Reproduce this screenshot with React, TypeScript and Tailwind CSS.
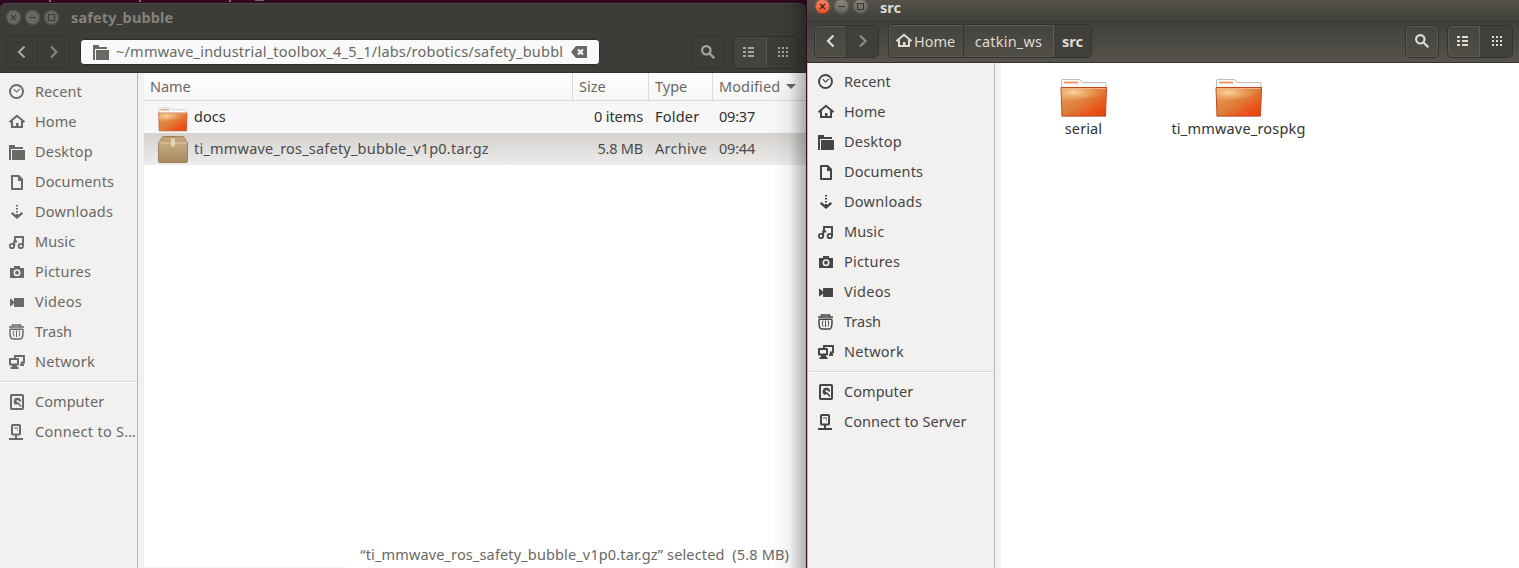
import React from "react";

type P = { children?: React.ReactNode; className?: string };

const Icon = ({ children, className = "" }: P) => (
  <svg viewBox="0 0 16 16" className={"h-4 w-4 shrink-0 " + className} fill="currentColor">
    {children}
  </svg>
);

const Recent = () => (
  <Icon>
    <circle cx="7.5" cy="7.5" r="6.5" fill="none" stroke="currentColor" strokeWidth="1.9" />
    <path d="M4.7 5.2l2.800 2.800L11 4.800" fill="none" stroke="currentColor" strokeWidth="1.1" />
  </Icon>
);
const Home = () => (
  <Icon>
    <path d="M.5 8.2L8 1.8l7.500 6.400" fill="none" stroke="currentColor" strokeWidth="2" />
    <path d="M3 7v6h10V7" fill="none" stroke="currentColor" strokeWidth="2" />
    <path d="M7 9h2.500v4H7z" />
  </Icon>
);
const Folder = () => (
  <Icon>
    <path d="M0 1h6v2h8v2H2v11H0z" />
    <path d="M3 6h13v10H3z" />
  </Icon>
);
const Document = () => (
  <Icon>
    <path fillRule="evenodd" d="M2.500 1H10l4 4v10q0 1-1 1H3q-1 0-1-1V1.500zM4 3v11h8V7H9V3z" />
  </Icon>
);
const Download = () => (
  <Icon>
    <path d="M7 1h2v1.500H7zM7 4h2v1.500H7zM7 7h2v1.500H7zM7 10h2v3H7z" />
    <path d="M2.700 8.800L8 13.500l5.300-4.700" fill="none" stroke="currentColor" strokeWidth="2.400" />
  </Icon>
);
const Music = () => (
  <Icon>
    <circle cx="3" cy="12" r="2.200" fill="none" stroke="currentColor" strokeWidth="1.800" />
    <circle cx="11.800" cy="12" r="2.200" fill="none" stroke="currentColor" strokeWidth="1.800" />
    <path d="M5.200 12V7.500h3M6 8V3h8v9" fill="none" stroke="currentColor" strokeWidth="1.900" />
  </Icon>
);
const Camera = () => (
  <Icon>
    <path fillRule="evenodd" d="M1 4h4V2h6v2h4v10H1zM8 5.200a3.500 3.500 0 100 7 3.500 3.500 0 000-7z" />
    <circle cx="8" cy="8.700" r="1.900" />
  </Icon>
);
const Video = () => (
  <Icon>
    <path d="M5 4.500q0-.5.5-.5h9q.5 0 .5.5v8q0 .5-.5.5h-9q-.5 0-.5-.5V10l-4 2.500v-8L5 7z" />
    <path d="M4.500 4.500v3M4.500 9.500v3" stroke="#f2f1f0" strokeWidth=".8" />
  </Icon>
);
const Trash = () => (
  <Icon>
    <path d="M3.500 2.500V1h8v1.500M0 3h15" fill="none" stroke="currentColor" strokeWidth="1.600" />
    <path d="M1.300 6v-.8h12.400V6M1 6q-.3 9 2.500 9h8q2.800 0 2.500-9" fill="none" stroke="currentColor" strokeWidth="1.500" />
    <path d="M5 6.500q-1.500 3 0 6M7.500 6.500v6.500M10 6.500q1.500 3 0 6" fill="none" stroke="currentColor" strokeWidth="1" />
  </Icon>
);
const Network = () => (
  <Icon>
    <path d="M6 4V2h9v6.500h-3" fill="none" stroke="currentColor" strokeWidth="1.900" />
    <path fillRule="evenodd" d="M0 5q0-1 1-1h8q1 0 1 1v5.500q0 1-1 1H8V13h1.500v2h-8v-2H3v-1.500H1q-1 0-1-1zM2 6v3.500h6V6z" />
    <path d="M11.500 9H14v1h1v2h-4z" />
  </Icon>
);
const Computer = () => (
  <Icon>
    <rect x="2" y="1" width="12" height="14" rx=".7" fill="none" stroke="currentColor" strokeWidth="2" />
    <path d="M7.500 11A3.700 3.700 0 1112 8L9.800 7 9 6 7.500 6.500v1.200l1.500 1z" />
    <path d="M8.500 8.500l3.500 4" stroke="currentColor" strokeWidth="1.500" />
  </Icon>
);
const Server = () => (
  <Icon>
    <rect x="3" y="1" width="8" height="9.500" rx=".7" fill="none" stroke="currentColor" strokeWidth="2" />
    <path d="M5 3.500h4v1H5zM8 5.500h1v1H8zM6 11h2v3h6v2H0v-2h6z" />
  </Icon>
);
const Search = () => (
  <Icon>
    <circle cx="6.300" cy="6.300" r="4.200" fill="none" stroke="currentColor" strokeWidth="2.200" />
    <path d="M9.300 9.300l5 5" stroke="currentColor" strokeWidth="2.300" />
  </Icon>
);
const ListIcon = () => (
  <Icon>
    <path d="M1 3h3v2H1zM1 7h3v2H1zM1 11h3v2H1zM6 3h6v2H6zM6 7h6v2H6zM6 11h6v2H6z" />
  </Icon>
);
const GridIcon = () => (
  <Icon>
    <path d="M4 3h2v2H4zM8 3h2v2H8zM12 3h2v2h-2zM4 7h2v2H4zM8 7h2v2H8zM12 7h2v2h-2zM4 11h2v2H4zM8 11h2v2H8zM12 11h2v2h-2z" />
  </Icon>
);
const Chevron = ({ right = false }: { right?: boolean }) => (
  <Icon>
    <path d={right ? "M5 2.500l5.500 5.500L5 13.500" : "M10.500 2.500L5 8l5.500 5.500"} fill="none" stroke="currentColor" strokeWidth="2.200" />
  </Icon>
);

const places: { name: string; icon: React.ReactNode; track: string }[] = [
  { name: "Recent", icon: <Recent />, track: "tracking-[0.05px]" },
  { name: "Home", icon: <Home />, track: "tracking-[0.1px]" },
  { name: "Desktop", icon: <Folder />, track: "tracking-[0.2px]" },
  { name: "Documents", icon: <Document />, track: "tracking-[0.1px]" },
  { name: "Downloads", icon: <Download />, track: "tracking-[0.25px]" },
  { name: "Music", icon: <Music />, track: "tracking-[0.1px]" },
  { name: "Pictures", icon: <Camera />, track: "tracking-[0.2px]" },
  { name: "Videos", icon: <Video />, track: "tracking-[0.3px]" },
  { name: "Trash", icon: <Trash />, track: "tracking-normal" },
  { name: "Network", icon: <Network />, track: "tracking-[0.25px]" },
  { name: "Computer", icon: <Computer />, track: "tracking-[0.05px]" },
];

const Sidebar = ({ last, className, lastTrack }: { last: string; className: string; lastTrack: string }) => (
  <nav className={"shrink-0 border-r border-[#b6b5b3] bg-[#f2f1f0] pt-1 " + className}>
    {[...places, { name: last, icon: <Server />, track: lastTrack }].map((p) => (
      <React.Fragment key={p.name}>
        {p.name === "Computer" && <div className="mt-1 mb-1 h-0.5 border-t border-b border-t-[#d9d8d7] border-b-white" />}
        <div className="flex h-[30px] items-center gap-2.5 pl-[9px]">
          {p.icon}
          <span className={"pb-0.5 whitespace-nowrap " + p.track}>{p.name}</span>
        </div>
      </React.Fragment>
    ))}
  </nav>
);

const FolderArt = ({ className }: { className: string }) => (
  <svg viewBox="0 0 48 40" preserveAspectRatio="none" className={className}>
    <defs>
      <linearGradient id="fo" x1="0" y1="0" x2="1" y2="1">
        <stop offset="0" stopColor="#e3a05a" />
        <stop offset=".5" stopColor="#e07c3a" />
        <stop offset=".78" stopColor="#eb5318" />
        <stop offset="1" stopColor="#d9420f" />
      </linearGradient>
      <radialGradient id="fg" cx=".27" cy=".3" r=".65">
        <stop offset="0" stopColor="#f8d69c" />
        <stop offset="1" stopColor="#f0a460" stopOpacity="0" />
      </radialGradient>
    </defs>
    <path d="M1.500 12V2.500q0-1 1-1H19q1 0 2 1.500t2 1.500h22q1 0 1 1V12z" fill="#fafafa" stroke="#bdbdbd" />
    <path d="M4 3.500h14v2H4z" fill="#f09a68" />
    <path d="M1 38.500h45" stroke="#999" strokeOpacity=".45" />
    <path d="M1 9.500h45.500L45.500 38H2z" fill="url(#fo)" stroke="#c4461c" />
    <path d="M1.500 10h45v8Q28 19 2 25z" fill="url(#fg)" />
    <path d="M2 10.500h43.500" stroke="#efb588" />
  </svg>
);

const BoxArt = () => (
  <svg viewBox="0 0 30 27" className="h-[27px] w-[30px]">
    <defs>
      <linearGradient id="bx" x1="0" y1="0" x2="0" y2="1">
        <stop offset="0" stopColor="#cdb58b" />
        <stop offset="1" stopColor="#a98a5f" />
      </linearGradient>
    </defs>
    <path d="M.5 7L4 1.500q.4-1 1.200-1H25q.8 0 1.200 1L29.500 7v18.500q0 1-1 1h-27q-1 0-1-1z" fill="url(#bx)" stroke="#9d8058" />
    <path d="M1 7L4.500 1h21L29 7z" fill="#c0a478" />
    <path d="M1 7h28" stroke="#dcc9a8" />
    <path d="M13 2.500h4v8h-4z" fill="#e7dbc3" fillOpacity=".85" />
  </svg>
);

const WinButtons = ({ active = false }: { active?: boolean }) => {
  const base = "h-[15px] w-[15px] rounded-full ";
  const grey = active ? "bg-linear-to-b from-[#8c8a83] to-[#63615b] text-[#393833]" : "bg-[#686761] text-[#3c3b37]";
  return (
    <div className="flex gap-1">
      <svg viewBox="0 0 15 15" className={base + (active ? "bg-linear-to-b from-[#f6896a] to-[#e64e1c] text-[#4a2013]" : grey)} stroke="currentColor" strokeWidth="1.300" fill="none">
        <circle cx="7.500" cy="7.500" r="7" strokeOpacity=".5" strokeWidth="1" />
        <path d="M5 5l5 5M10 5l-5 5" />
      </svg>
      <svg viewBox="0 0 15 15" className={base + grey} stroke="currentColor" strokeWidth="1.200" fill="none">
        <circle cx="7.500" cy="7.500" r="7" strokeOpacity=".5" strokeWidth="1" />
        <path d="M4 7.500h7" />
      </svg>
      <svg viewBox="0 0 15 15" className={base + grey} stroke="currentColor" strokeWidth="1.200" fill="none">
        <circle cx="7.500" cy="7.500" r="7" strokeOpacity=".5" strokeWidth="1" />
        <path d="M4.500 4.500h6v6h-6z" />
      </svg>
    </div>
  );
};

const LeftWindow = () => (
  <section className="relative flex h-[568px] w-[806px] shrink-0 flex-col overflow-hidden bg-[#300a24] pt-[3px] text-[#696965]">
    <div className="absolute top-0 left-[49px] h-[2px] w-[2px] bg-[#8a6b3c]" />
    <div className="absolute top-0 left-[139px] h-[2px] w-[2px] bg-[#8a6b3c]" />
    <div className="absolute top-0 left-[229px] h-[2px] w-[2px] bg-[#8a6b3c]" />
    <div className="absolute top-0 left-[255px] h-px w-[9px] bg-[#77647a]" />
    <header className="h-[70px] shrink-0 rounded-t-md border-t border-b border-t-[#4c4b47] border-b-[#31302c] bg-[#3d3c38]">
      <div className="flex h-[27px] items-center gap-[12px] pl-[6px]">
        <WinButtons />
        <span className="pb-px font-bold tracking-[0.12px] text-[#84827b]">safety_bubble</span>
      </div>
      <div className="flex h-[42px] items-center pl-[6px]">
        <div className="flex h-8 w-16 rounded-[5px] border border-[#34332f] text-[#a7a49b]">
          <div className="flex w-8 items-center justify-center border-r border-[#34332f]">
            <Chevron />
          </div>
          <div className="flex w-8 items-center justify-center text-[#85827b]">
            <Chevron right />
          </div>
        </div>
        <div className="ml-[10px] flex h-[26px] w-[520px] items-center rounded-[4px] border border-[#2d2c29] bg-[#f9f9f9] pl-3">
          <Folder />
          <span className="ml-[7px] w-[447px] overflow-hidden pb-0.5 tracking-[0.21px] whitespace-nowrap">~/mmwave_industrial_toolbox_4_5_1/labs/robotics/safety_bubbl</span>
          <svg viewBox="0 0 16 12" className="ml-[8px] h-3 w-4">
            <path d="M5 0h11v12H5L0 6z" fill="currentColor" />
            <path d="M7 3.500l5 5M12 3.500l-5 5" stroke="#f9f9f9" strokeWidth="2" />
          </svg>
        </div>
        <div className="ml-[91px] flex h-8 w-[34px] items-center justify-center rounded-[5px] border border-[#34332f] text-[#a9a69d]">
          <Search />
        </div>
        <div className="ml-[8px] flex h-[33px] w-[66px] rounded-[5px] border border-[#302f2b] text-[#a9a69d]">
          <div className="flex w-[33px] items-center justify-center rounded-l-[4px] border-r border-[#57564f] bg-[#44433f]">
            <ListIcon />
          </div>
          <div className="flex w-[32px] items-center justify-center">
            <GridIcon />
          </div>
        </div>
      </div>
    </header>
    <div className="flex min-h-0 flex-1 bg-[#f2f1f0]">
      <Sidebar last="Connect to S…" lastTrack="tracking-[0.3px]" className="w-[138px]" />
      <main className="relative ml-1.5 flex-1 bg-white text-[#2f2f2f]">
        <div className="flex h-7 items-center border-b border-[#d9d8d5] bg-linear-to-b from-white to-[#f5f5f4] text-[#696965]">
          <span className="flex h-full w-[429px] items-center border-r border-[#dad9d7] pb-0.5 pl-1.5 tracking-[-0.1px]">Name</span>
          <span className="flex h-full w-[76px] items-center border-r border-[#dad9d7] pb-0.5 pl-1.5">Size</span>
          <span className="flex h-full w-[64px] items-center border-r border-[#dad9d7] pb-0.5 pl-1.5">Type</span>
          <span className="flex h-full flex-1 items-center gap-[6px] pl-1.5">
            <span className="pb-0.5 tracking-[0.1px]">Modified</span>
            <span className="h-0 w-0 border-x-[5px] border-t-[5px] border-x-transparent border-t-[#696965]" />
          </span>
        </div>
        <div className="flex h-8 items-center bg-[#f7f7f7]">
          <span className="flex w-[429px] items-center gap-1.5 pl-3.5">
            <FolderArt className="mt-1 h-[25px] w-[30px]" />
            <span className="pb-0.5">docs</span>
          </span>
          <span className="w-[76px] pr-1.5 pb-0.5 text-right tracking-[-0.1px]">0 items</span>
          <span className="w-16 pb-0.5 pl-1.5 tracking-[0.2px]">Folder</span>
          <span className="pb-0.5 pl-1.5 tracking-[-0.2px]">09:37</span>
        </div>
        <div className="flex h-8 items-center bg-linear-to-b from-[#d4d1ce] to-[#eeedec] text-[#4c4c4c]">
          <span className="flex w-[429px] items-center gap-1.5 pl-3.5">
            <BoxArt />
            <span className="pb-0.5 tracking-[0.21px]">ti_mmwave_ros_safety_bubble_v1p0.tar.gz</span>
          </span>
          <span className="w-[76px] pr-1.5 pb-0.5 text-right tracking-[-0.2px]">5.8 MB</span>
          <span className="w-16 pb-0.5 pl-1.5 tracking-[0.25px]">Archive</span>
          <span className="pb-0.5 pl-1.5 tracking-[-0.2px]">09:44</span>
        </div>
        <div className="absolute right-[17px] bottom-1 tracking-[0.14px] whitespace-pre text-[#696965]">“ti_mmwave_ros_safety_bubble_v1p0.tar.gz” selected  (5.8 MB)</div>
        <div className="absolute bottom-0 left-0 h-px w-[205px] bg-[#f5f5f5]" />
      </main>
    </div>
    <div className="absolute inset-y-0 right-0 w-[34px] bg-linear-to-r from-transparent via-black/5 to-black/30" />
  </section>
);

const RightWindow = () => (
  <section className="flex h-[568px] w-[713px] shrink-0 flex-col border-l border-[#300a24] text-[#454545]">
    <header className="h-[63px] shrink-0 border-b border-[#33322e] text-[#dfdbd2]">
      <div className="flex h-[21px] items-start gap-[12px] bg-linear-to-b from-[#55534a] to-[#403f3a] pl-2">
        <div className="mt-[-1px]">
          <WinButtons active />
        </div>
        <span className="leading-[14px] font-bold">src</span>
      </div>
      <div className="flex h-[41px] items-center border-t border-[#3a3935] bg-linear-to-b from-[#403f3b] to-[#55534b] pb-[2px] pl-[7px]">
        <div className="flex h-[33px] w-[65px] rounded-[5px] border border-[#33322e] bg-linear-to-b from-[#45443f] to-[#504e47] shadow-[inset_0_0_0_1px_#5a5850]">
          <div className="flex w-8 items-center justify-center border-r border-[#36352f]">
            <Chevron />
          </div>
          <div className="flex flex-1 items-center justify-center rounded-r-[4px] bg-[#403f3a] text-[#8f8b82]">
            <Chevron right />
          </div>
        </div>
        <div className="ml-[9px] flex h-[34px] w-[204px] rounded-[5px] border border-[#33322e] bg-linear-to-b from-[#45443f] to-[#504e47] shadow-[inset_0_0_0_1px_#5a5850]">
          <div className="flex w-[75px] items-center gap-[2px] border-r border-[#36352f] pl-[7px]">
            <Home />
            <span className="pb-px">Home</span>
          </div>
          <div className="flex w-[90px] items-center justify-center border-r border-[#605e56] pb-px tracking-[0.2px]">catkin_ws</div>
          <div className="flex flex-1 items-center justify-center rounded-r-[4px] bg-[#403f3a] pb-px font-bold">src</div>
        </div>
        <div className="ml-auto flex h-[33px] w-[34px] items-center justify-center rounded-[5px] border border-[#33322e] bg-linear-to-b from-[#45443f] to-[#504e47] shadow-[inset_0_0_0_1px_#5a5850]">
          <Search />
        </div>
        <div className="mr-[6px] ml-[8px] flex h-[33px] w-[66px] rounded-[5px] border border-[#33322e] bg-linear-to-b from-[#45443f] to-[#504e47] shadow-[inset_0_0_0_1px_#5a5850]">
          <div className="flex w-[32px] items-center justify-center border-r border-[#605e56]">
            <ListIcon />
          </div>
          <div className="flex flex-1 items-center justify-center rounded-r-[4px] bg-[#403f3a]">
            <GridIcon />
          </div>
        </div>
      </div>
    </header>
    <div className="flex min-h-0 flex-1 border-l border-[#c9b9c2] bg-[#f2f1f0]">
      <Sidebar last="Connect to Server" lastTrack="tracking-[0.06px]" className="w-[187px] pl-px" />
      <main className="ml-1.5 flex flex-1 bg-white pt-[15px] pl-[5px] text-[#333]">
        <div className="flex w-[155px] flex-col items-center">
          <FolderArt className="h-[40px] w-[48px]" />
          <span className="leading-5 tracking-[0.1px]">serial</span>
        </div>
        <div className="flex w-[155px] flex-col items-center">
          <FolderArt className="h-[40px] w-[48px]" />
          <span className="leading-5 tracking-[0.2px]">ti_mmwave_rospkg</span>
        </div>
      </main>
    </div>
  </section>
);

export default function App() {
  return (
    <div className="flex h-[568px] w-[1519px] overflow-hidden bg-white font-['Noto_Sans','Open_Sans',sans-serif] text-[14.5px] leading-5">
      <LeftWindow />
      <RightWindow />
    </div>
  );
}
